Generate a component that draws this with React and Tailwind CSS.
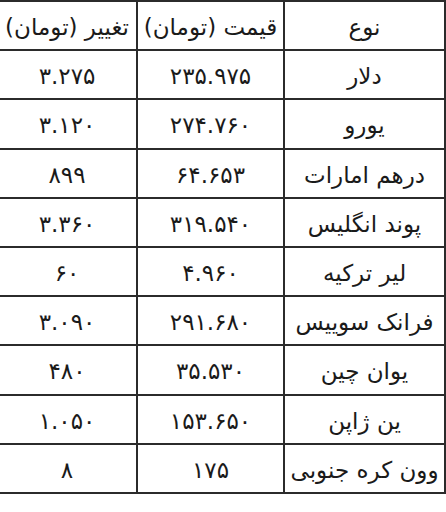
const rows = [
  ['نوع', 'قیمت (تومان)', 'تغییر (تومان)'],
  ['دلار', '۲۳۵.۹۷۵', '۳.۲۷۵'],
  ['یورو', '۲۷۴.۷۶۰', '۳.۱۲۰'],
  ['درهم امارات', '۶۴.۶۵۳', '۸۹۹'],
  ['پوند انگلیس', '۳۱۹.۵۴۰', '۳.۳۶۰'],
  ['لیر ترکیه', '۴.۹۶۰', '۶۰'],
  ['فرانک سوییس', '۲۹۱.۶۸۰', '۳.۰۹۰'],
  ['یوان چین', '۳۵.۵۳۰', '۴۸۰'],
  ['ین ژاپن', '۱۵۳.۶۵۰', '۱.۰۵۰'],
  ['وون کره جنوبی', '۱۷۵', '۸'],
];

const cell = 'h-[49.2px] border-b-2 border-l-2 border-[#2b2b2b] flex items-center justify-center pt-1 whitespace-nowrap';

export default function App() {
  return (
    <div className="w-[446px] h-[512px] overflow-hidden bg-white flex justify-end">
      <div
        dir="rtl"
        className="shrink-0 w-[450px] grid grid-cols-[161px_147px_1fr] border-t-2 border-r-2 border-[#2b2b2b] self-start text-[23px] leading-none text-[#1a1a1a] font-['DejaVu_Sans',sans-serif]"
      >
        {rows.map(([name, price, change]) => [
          <div key={name + 'a'} className={cell}>{name}</div>,
          <div key={name + 'b'} className={cell}>{price}</div>,
          <div key={name + 'c'} className={cell}>{change}</div>,
        ])}
      </div>
    </div>
  );
}
